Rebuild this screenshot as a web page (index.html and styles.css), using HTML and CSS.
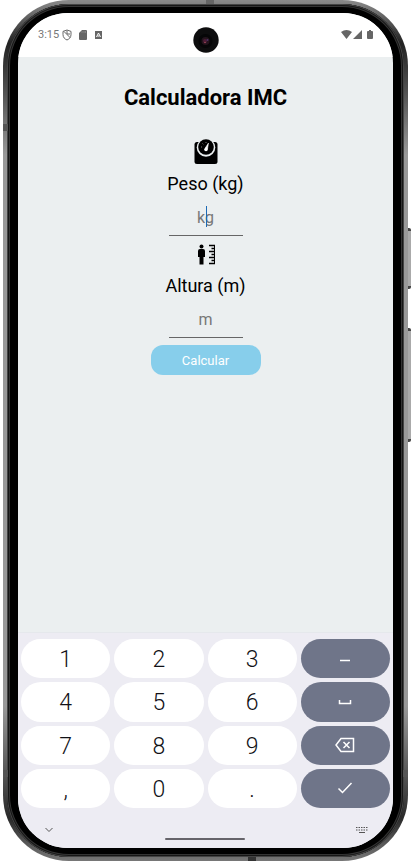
FILE: index.html
```html
<!DOCTYPE html>
<html lang="pt">
<head>
<meta charset="utf-8">
<meta name="viewport" content="width=device-width, initial-scale=1">
<title>Calculadora IMC</title>
<link rel="stylesheet" href="styles.css">
</head>
<body>
<div class="phone">
  <span class="notch notch-top"></span>
  <span class="notch notch-bottom"></span>
  <span class="band band-top band-left"></span>
  <span class="band band-bottom band-left"></span>
  <span class="band band-bottom band-right"></span>
  <span class="side-button power"></span>
  <span class="side-button volume"></span>
  <div class="screen">
    <header class="status">
      <span class="clock">3:15</span>
      <svg class="shield" width="10" height="12" viewBox="0 0 10 12" fill="none" stroke="#666"><path d="M5 1 9 2.400v3.200C9 8.300 7.300 10 5 11 2.700 10 1 8.300 1 5.600V2.400zM2 2.500l6 6M5 1.500v3.500h3"/></svg>
      <svg class="card" width="8" height="10" viewBox="0 0 8 10" fill="#666"><path d="M3 0h4q1 0 1 1v8q0 1-1 1H1q-1 0-1-1V3z"/><path d="M3 1v2M5 1v2M6.500 1v2" stroke="#999" stroke-width=".6"/></svg>
      <svg class="debug" width="7" height="8" viewBox="0 0 7 8"><path fill="#666" d="M0 0h7v8H0z"/><path d="M1.500 6 3.500 2l2 4M2.500 5h2" fill="none" stroke="#fff"/></svg>
      <svg class="signals" width="32" height="10" viewBox="0 0 32 10" fill="#666"><path d="M0 2Q5.500-2 11 2L5.500 9zM12 9l9-9v9zM27 1h1V0h2v1h1q1 0 1 1v6q0 1-1 1h-4q-1 0-1-1V2q0-1 1-1z"/></svg>
      <svg class="camera" width="26" height="26" viewBox="0 0 26 26"><circle cx="13" cy="13" r="12.700" fill="#0d0d0e"/><circle cx="12.500" cy="14" r="7" fill="#060607"/><circle cx="12.500" cy="14" r="4" fill="#24141d"/><circle cx="12" cy="14" r="2" fill="#4b1c35"/><circle cx="14.500" cy="13" r="1" fill="#4b3265"/><circle cx="12" cy="15.500" r=".8" fill="#a34a5c"/></svg>
    </header>
    <main class="app">
      <h1>Calculadora IMC</h1>
      <form class="form">
        <svg class="icon" width="24" height="26" viewBox="0 0 24 26"><path d="M3 3h18q2.500 0 2.500 2.500v17q0 2.500-2.500 2.500H3Q.5 25 .5 22.500v-17Q.5 3 3 3z"/><circle cx="12" cy="8.500" r="9.300" fill="#ebeff0"/><circle cx="12" cy="8" r="7.800"/><path d="M11.200 9 14.500 4l-1 6z" fill="#fff" stroke="#fff" stroke-width=".5"/><circle cx="12" cy="10.500" r="1.800" fill="#fff"/><path d="M7 8h1M8.500 4.500l.8.800M12 3v1" stroke="#aaa" stroke-width=".7"/></svg>
        <label for="peso">Peso (kg)</label>
        <div class="field focused"><input id="peso" type="text" inputmode="decimal" placeholder="kg"></div>
        <svg class="icon" width="24" height="26" viewBox="0 0 24 26"><circle cx="7.500" cy="5.500" r="2"/><path d="M6 8h3q2 0 2 2v6H9.500v7.500h-4V16H4v-6q0-2 2-2z"/><path d="M15 4.500h6M17.500 7.500h3.500M15 10.500h6M17.500 13.500h3.500M15 16.500h6M17.500 19.500h3.500M15 22.500h6" stroke="#000" stroke-width="1.500"/><path d="M20.500 4v19" stroke="#000"/></svg>
        <label for="altura">Altura (m)</label>
        <div class="field"><input id="altura" type="text" inputmode="decimal" placeholder="m"></div>
        <button class="submit" type="button">Calcular</button>
      </form>
    </main>
    <section class="keyboard" aria-label="Teclado">
      <div class="keys">
        <button>1</button><button>2</button><button>3</button>
        <button class="action" aria-label="Menos"><svg width="24" height="24" viewBox="0 0 24 24"><path d="M7 13.500h10"/></svg></button>
        <button>4</button><button>5</button><button>6</button>
        <button class="action" aria-label="Espaço"><svg width="24" height="24" viewBox="0 0 24 24"><path d="M6.500 10v3.500h11V10"/></svg></button>
        <button>7</button><button>8</button><button>9</button>
        <button class="action" aria-label="Apagar"><svg width="24" height="24" viewBox="0 0 24 24"><path d="M8 5.500h12.500v13H8L3 12zM10.500 9l6 6M16.500 9l-6 6"/></svg></button>
        <button>,</button><button>0</button><button>.</button>
        <button class="action" aria-label="Confirmar"><svg width="24" height="24" viewBox="0 0 24 24"><path d="m5.500 12.500 4 4 9-9.500"/></svg></button>
      </div>
      <div class="nav">
        <button aria-label="Ocultar"><svg width="10" height="8" viewBox="0 0 10 8" fill="none" stroke="#555"><path d="m1.500 2 3.500 3.500L8.500 2"/></svg></button>
        <span class="home"></span>
        <button aria-label="Teclados"><svg width="12" height="8" viewBox="0 0 12 8" fill="none" stroke="#555"><path d="M0 1.500h12M0 4h12" stroke-dasharray="1.500 1"/><path d="M3 6.500h6"/></svg></button>
      </div>
    </section>
  </div>
</div>
</body>
</html>
```
FILE: styles.css
```css
* { box-sizing: border-box; }
body {
  margin: 0;
  padding: 0 8px 3px 3px;
  background: #fff;
  font-family: Roboto, sans-serif;
}
button { border: 0; padding: 0; margin: 0; font-family: inherit; }
svg { display: block; }
.phone {
  position: relative;
  display: flex;
  min-height: calc(100vh - 3px);
  padding: 9px 11px;
  border: 4px solid transparent;
  border-radius: 66px;
  background:
    linear-gradient(#000, #000) padding-box,
    linear-gradient(#8a8a8a 0, #777 1%, #222 5%, #555 11%, #999 18%, #999 82%, #555 90%, #2a2a2a 95%, #777 100%) border-box;
  box-shadow: inset 0 0 0 1px #444, inset 0 0 0 2px #161616, inset 0 0 0 3px #333;
}
.screen {
  flex: 1;
  display: flex;
  flex-direction: column;
  min-width: 0;
  overflow: hidden;
  border-radius: 50px;
  background: #ebeff0;
}
.notch { position: absolute; width: 8px; height: 4px; background: #666; }
.notch-top { top: -4px; left: 50%; }
.notch-bottom { bottom: -4px; right: 148px; background: #333; }
.band { position: absolute; width: 5px; height: 7px; background: #555; }
.band-left { left: -4px; }
.band-right { right: -4px; }
.band-top { top: 120px; }
.band-bottom { bottom: 80px; }
.side-button {
  position: absolute;
  right: -7px;
  width: 3px;
  border: solid #444;
  border-width: 3px 0;
  border-radius: 0 2px 2px 0;
  background: #aaa;
}
.power { top: 224px; height: 61px; }
.volume { top: 324px; height: 114px; }
.status {
  position: relative;
  display: flex;
  align-items: center;
  height: 44px;
  padding: 0 20px;
  background: #fff;
}
.clock { margin-right: 3px; font-size: 11px; line-height: 16px; color: #777; }
.shield { margin-right: 7px; }
.card { margin-right: 8px; }
.signals { margin-left: auto; }
.camera { position: absolute; top: 14px; left: calc(50% - 13px); }
.app { flex: 1; padding-top: 25px; text-align: center; }
h1 { margin: 0 0 25px; font-size: 22px; line-height: 32px; font-weight: 700; color: #000; }
.form { display: flex; flex-direction: column; align-items: center; }
.icon { margin-bottom: 4px; }
label { font-size: 18px; line-height: 30px; color: #000; }
.field { position: relative; width: 74px; height: 37px; margin-bottom: 5px; border-bottom: 1px solid #666; }
.field input {
  width: 100%;
  height: 36px;
  padding: 0;
  border: 0;
  outline: 0;
  background: transparent;
  font: 16px Roboto, sans-serif;
  text-align: center;
}
.field input::placeholder { color: #777; opacity: 1; }
.focused::after {
  content: "";
  position: absolute;
  top: 7px;
  left: 50%;
  width: 1px;
  height: 21px;
  background: #1c6ab5;
}
.submit {
  width: 110px;
  height: 30px;
  margin-top: 2px;
  border-radius: 12px;
  background: #87ceeb;
  color: #fff;
  font-size: 13px;
}
.keyboard { padding: 6px 3px 0; background: #edecf3; border-top: 1px solid #e5e8ec; }
.keys { display: grid; grid-template-columns: repeat(4, 1fr); grid-auto-rows: 1fr; gap: 4px; height: 169px; }
.keys button {
  display: grid;
  place-items: center;
  padding-top: 2px;
  border-radius: 20px;
  background: #fff;
  color: #111116;
  font-size: 23px;
  font-weight: 300;
}
.keys .action { padding-top: 0; background: #6f7589; }
.action svg { fill: none; stroke: #fff; stroke-width: 1.500; }
.nav { display: flex; align-items: center; justify-content: space-between; height: 40px; padding: 4px 22px 0 23px; }
.nav button { background: transparent; }
.home { width: 80px; height: 2px; margin-top: 18px; border-radius: 1px; background: #66646a; }
```
